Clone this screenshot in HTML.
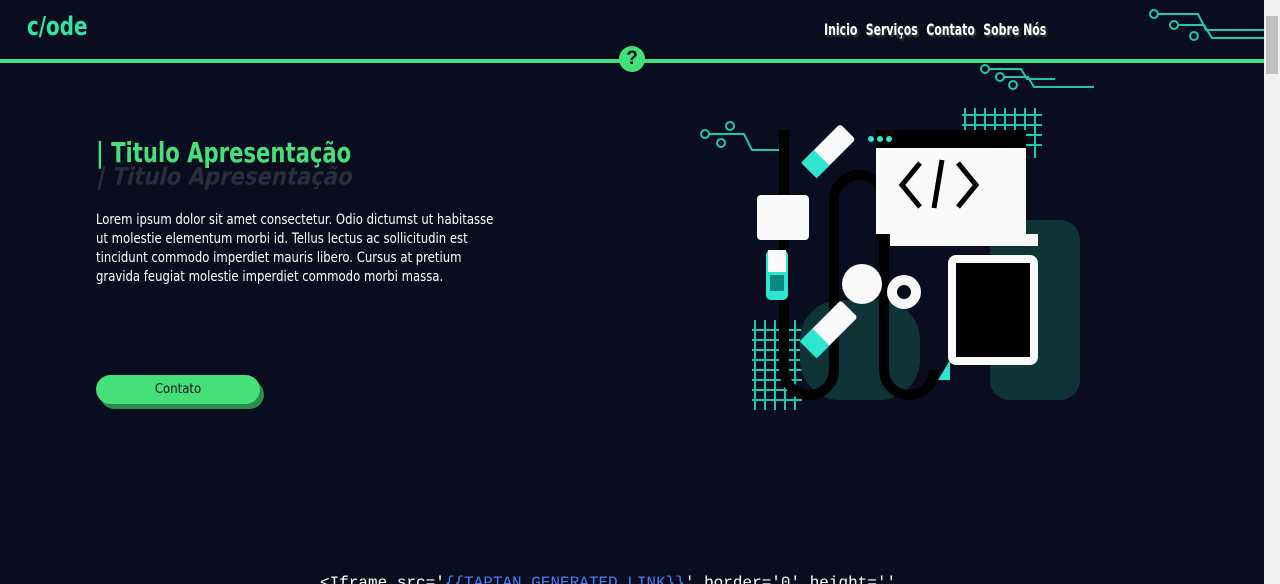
<!DOCTYPE html>
<html><head><meta charset="utf-8"><style>
*{margin:0;padding:0;box-sizing:border-box}
html,body{width:1280px;height:584px;overflow:hidden}
body{background:#0a0d1f;font-family:"Liberation Sans",sans-serif;position:relative}
.sb{position:absolute;right:0;top:0;width:16px;height:584px;background:#f1f1f1}
.sb div{position:absolute;left:2px;top:16px;width:12px;height:58px;background:#c1c1c1}
.logo{position:absolute;left:27px;top:12px;color:#2ee6a6;font-size:26px;font-weight:bold;font-family:"DejaVu Sans Condensed","Liberation Sans",sans-serif;transform:scaleX(0.85);transform-origin:left}
.nav{position:absolute;left:824px;top:20px;color:#fff;font-size:16px;font-weight:bold;font-family:"DejaVu Sans Condensed",sans-serif;text-shadow:2px 2px 2px #444;white-space:nowrap;transform:scaleX(0.76);transform-origin:left}
.nav span{margin-right:6px}
.line{position:absolute;left:0;top:59px;width:1264px;height:4px;background:#45e07a}
.q{position:absolute;left:619px;top:46px;width:26px;height:26px;border-radius:50%;background:#45e07a;color:#0a0d1f;font-weight:bold;font-size:19px;text-align:center;line-height:26px}
h1{position:absolute;left:96px;top:136px;color:#45e07a;font-size:28px;font-family:"DejaVu Sans Condensed",sans-serif;font-weight:bold;white-space:nowrap;transform:scaleX(0.84);transform-origin:left}
.sh{position:absolute;left:98px;top:160px;color:#2a2d3d;font-size:28px;font-family:"DejaVu Sans Condensed",sans-serif;font-weight:bold;white-space:nowrap;transform:scaleX(0.84) skewX(-15deg) scaleY(0.85);transform-origin:left}
p{position:absolute;left:96px;top:211px;color:#fff;font-size:14.5px;line-height:19px;font-family:"DejaVu Sans Condensed",sans-serif;white-space:nowrap;transform:scaleX(0.895);transform-origin:left}
.btn{position:absolute;left:96px;top:375px;width:164px;height:29px;border-radius:15px;background:#45e07a;box-shadow:4px 5px 0 #2a8a4a;text-align:center;line-height:29px;font-size:13px;color:#111;font-family:"DejaVu Sans Condensed",sans-serif}
.code{position:absolute;left:320px;top:574px;font-family:"Liberation Mono",monospace;font-size:16px;color:#fff;white-space:pre}
.code b{color:#4a7cf0;font-weight:normal}
</style></head><body>
<div class="logo">c/ode</div>
<div class="nav"><span>Inicio</span> <span>Serviços</span> <span>Contato</span> <span>Sobre Nós</span></div>
<svg style="position:absolute;left:1140px;top:0" width="124" height="45" fill="none" stroke="#1fc9a8" stroke-width="2">
<circle cx="14" cy="14" r="4"/><path d="M18 14h40l8 16h60"/><circle cx="34" cy="25" r="4"/><path d="M38 25h26l8 13h60"/><circle cx="54" cy="36" r="4"/></svg>
<div class="line"></div>
<div class="q">?</div>
<h1>| Titulo Apresentação</h1>
<div class="sh">| Titulo Apresentação</div>
<p>Lorem ipsum dolor sit amet consectetur. Odio dictumst ut habitasse<br>ut molestie elementum morbi id. Tellus lectus ac sollicitudin est<br>tincidunt commodo imperdiet mauris libero. Cursus at pretium<br>gravida feugiat molestie imperdiet commodo morbi massa.</p>
<div class="btn">Contato</div>
<svg style="position:absolute;left:700px;top:60px" width="400" height="350">
<g fill="none" stroke="#1fc9a8" stroke-width="2">
<circle cx="285" cy="9" r="4"/><path d="M289 9h32l6 10h28"/><circle cx="300" cy="17" r="4"/><path d="M304 17h24l6 10h60"/><circle cx="313" cy="25" r="4"/>
<circle cx="5" cy="74" r="4"/><path d="M9 74h35l8 16h30"/><circle cx="30" cy="66" r="4"/><circle cx="21" cy="83" r="4"/>
<path d="M265 48v90M275 48v90M285 48v90M295 48v90M305 48v90M315 48v90M325 48v90M335 48v50M262 55h80M262 65h80M262 75h80M262 85h80M262 95h50"/>
<path d="M55 260v110M65 260v110M75 260v110M85 260v110M95 260v110M52 270h50M52 280h50M52 290h50M52 300h50M52 310h50M52 320h50M52 330h50M52 340h50"/>
</g>
<g fill="#0f3438"><rect x="290" y="160" width="90" height="180" rx="20"/><rect x="100" y="240" width="120" height="100" rx="40"/></g>
<path d="M84 70v240a25 25 0 0 0 50 0V140a25 25 0 0 1 50 0v170a25 25 0 0 0 50 0" stroke="#000" stroke-width="10" fill="none"/>
<rect x="176" y="70" width="150" height="110" fill="#000"/>
<rect x="176" y="88" width="150" height="86" fill="#fafafa"/>
<circle cx="171" cy="79" r="3" fill="#2ee6d0"/><circle cx="180" cy="79" r="3" fill="#2ee6d0"/><circle cx="189" cy="79" r="3" fill="#2ee6d0"/>
<rect x="190" y="174" width="148" height="12" fill="#fafafa"/>
<path d="M220 103l-18 22 18 22M242 100l-8 48M258 103l18 22-18 22" stroke="#000" stroke-width="5" fill="none"/>
<rect x="248" y="195" width="90" height="110" rx="8" fill="#fafafa"/><rect x="256" y="203" width="74" height="94" fill="#000"/>
<path d="M238 320l12-20v20z" fill="#2ee6d0"/>
<rect x="57" y="135" width="52" height="45" rx="4" fill="#fafafa"/>
<rect x="66" y="190" width="22" height="50" rx="5" fill="#2ee6d0"/><rect x="70" y="215" width="14" height="16" fill="#0a8a80"/><rect x="68" y="190" width="18" height="22" fill="#fafafa"/>
<g fill="#fafafa"><circle cx="162" cy="224" r="20"/><circle cx="204" cy="232" r="17"/></g>
<circle cx="204" cy="232" r="7" fill="#0a0d1f"/>
<g transform="rotate(-45 128 90)"><rect x="100" y="80" width="55" height="22" rx="3" fill="#fafafa"/><rect x="100" y="80" width="18" height="22" fill="#2ee6d0"/></g>
<g transform="rotate(-45 128 270)"><rect x="100" y="258" width="58" height="24" rx="3" fill="#fafafa"/><rect x="100" y="258" width="18" height="24" fill="#2ee6d0"/></g>
</svg>
<div class="code">&lt;Iframe src='<b>{{TAPTAN GENERATED LINK}}</b>' border='0' height=''</div>
<div class="sb"><div></div></div>
</body></html>
